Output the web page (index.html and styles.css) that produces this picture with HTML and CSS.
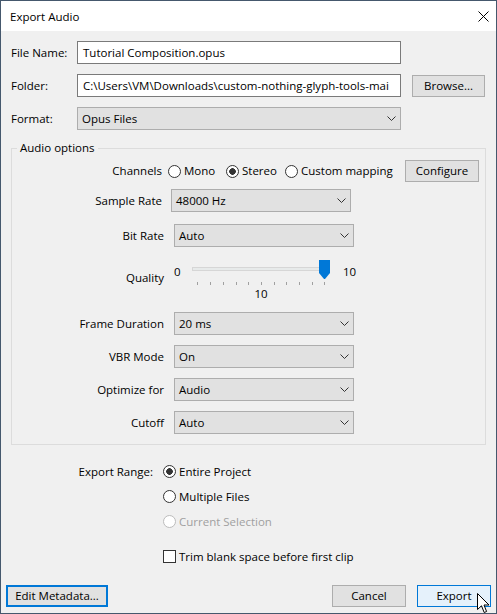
FILE: index.html
```html
<!DOCTYPE html>
<html lang="en">
<head>
<meta charset="utf-8">
<title>Export Audio</title>
<link rel="stylesheet" href="styles.css">
</head>
<body>
<div class="window">
  <header class="titlebar">
    <span class="title">Export Audio</span>
    <svg class="close" width="11" height="11" viewBox="0 0 11 11"><path d="M0.5 0.5 L10.5 10.5 M10.5 0.5 L0.5 10.5" stroke="#000" stroke-width="1" fill="none"/></svg>
  </header>
  <main class="content">
    <div class="row">
      <span class="lbl">File Name:</span>
      <div class="textbox">Tutorial Composition.opus</div>
    </div>
    <div class="row">
      <span class="lbl">Folder:</span>
      <div class="textbox">C:\Users\VM\Downloads\custom-nothing-glyph-tools-mai</div>
      <div class="btn browse">Browse...</div>
    </div>
    <div class="row">
      <span class="lbl">Format:</span>
      <div class="combo format"><span>Opus Files</span><svg class="chev" width="9" height="5" viewBox="0 0 9 5"><polyline points="0.5,0.5 4.5,4.5 8.5,0.5" fill="none" stroke="#333" stroke-width="1"/></svg></div>
    </div>

    <fieldset class="group">
      <legend>Audio options</legend>
      <div class="g-row channels">
        <span class="g-lbl narrow2">Channels</span>
        <span class="radio-opt mono"><span class="radio"></span>Mono</span>
        <span class="radio-opt stereo"><span class="radio checked"></span>Stereo</span>
        <span class="radio-opt custom"><span class="radio"></span>Custom mapping</span>
        <div class="btn configure">Configure</div>
      </div>
      <div class="g-row sample">
        <span class="g-lbl narrow">Sample Rate</span>
        <div class="combo opt-combo"><span>48000 Hz</span><svg class="chev" width="9" height="5" viewBox="0 0 9 5"><polyline points="0.5,0.5 4.5,4.5 8.5,0.5" fill="none" stroke="#333" stroke-width="1"/></svg></div>
      </div>
      <div class="g-row bitrate">
        <span class="g-lbl">Bit Rate</span>
        <div class="combo opt-combo"><span>Auto</span><svg class="chev" width="9" height="5" viewBox="0 0 9 5"><polyline points="0.5,0.5 4.5,4.5 8.5,0.5" fill="none" stroke="#333" stroke-width="1"/></svg></div>
      </div>
      <div class="g-row quality">
        <span class="g-lbl q-lbl">Quality</span>
        <span class="q-min">0</span>
        <div class="slider">
          <div class="track"></div>
          <svg class="ticks" width="138" height="3" viewBox="0 0 138 3">
            <g stroke="#a0a0a0" stroke-width="1">
              <line x1="5.5" y1="0" x2="5.5" y2="3"/>
              <line x1="18.5" y1="0" x2="18.5" y2="3"/>
              <line x1="31.5" y1="0" x2="31.5" y2="3"/>
              <line x1="44.5" y1="0" x2="44.5" y2="3"/>
              <line x1="56.5" y1="0" x2="56.5" y2="3"/>
              <line x1="69.5" y1="0" x2="69.5" y2="3"/>
              <line x1="82.5" y1="0" x2="82.5" y2="3"/>
              <line x1="94.5" y1="0" x2="94.5" y2="3"/>
              <line x1="107.5" y1="0" x2="107.5" y2="3"/>
              <line x1="120.5" y1="0" x2="120.5" y2="3"/>
              <line x1="132.5" y1="0" x2="132.5" y2="3"/>
            </g>
          </svg>
          <div class="q-val">10</div>
          <svg class="thumb" width="11" height="19" viewBox="0 0 11 19"><polygon points="0,0 11,0 11,13 6,19 5,19 0,13" fill="#0078d7"/></svg>
        </div>
        <span class="q-max">10</span>
      </div>
      <div class="g-row">
        <span class="g-lbl">Frame Duration</span>
        <div class="combo opt-combo"><span>20 ms</span><svg class="chev" width="9" height="5" viewBox="0 0 9 5"><polyline points="0.5,0.5 4.5,4.5 8.5,0.5" fill="none" stroke="#333" stroke-width="1"/></svg></div>
      </div>
      <div class="g-row">
        <span class="g-lbl">VBR Mode</span>
        <div class="combo opt-combo"><span>On</span><svg class="chev" width="9" height="5" viewBox="0 0 9 5"><polyline points="0.5,0.5 4.5,4.5 8.5,0.5" fill="none" stroke="#333" stroke-width="1"/></svg></div>
      </div>
      <div class="g-row">
        <span class="g-lbl">Optimize for</span>
        <div class="combo opt-combo"><span>Audio</span><svg class="chev" width="9" height="5" viewBox="0 0 9 5"><polyline points="0.5,0.5 4.5,4.5 8.5,0.5" fill="none" stroke="#333" stroke-width="1"/></svg></div>
      </div>
      <div class="g-row">
        <span class="g-lbl">Cutoff</span>
        <div class="combo opt-combo"><span>Auto</span><svg class="chev" width="9" height="5" viewBox="0 0 9 5"><polyline points="0.5,0.5 4.5,4.5 8.5,0.5" fill="none" stroke="#333" stroke-width="1"/></svg></div>
      </div>
    </fieldset>

    <div class="range">
      <span class="range-lbl">Export Range:</span>
      <div class="range-opts">
        <div class="opt"><span class="radio checked"></span>Entire Project</div>
        <div class="opt"><span class="radio"></span>Multiple Files</div>
        <div class="opt disabled"><span class="radio"></span>Current Selection</div>
        <div class="opt check-row"><span class="checkbox"></span>Trim blank space before first clip</div>
      </div>
    </div>
  </main>

  <footer class="footer">
    <div class="btn focused meta">Edit Metadata...</div>
    <div class="footer-right">
      <div class="btn dlg">Cancel</div>
      <div class="btn dlg hover">Export</div>
    </div>
  </footer>

  <svg class="cursor" width="13" height="21" viewBox="0 0 13 21"><path d="M0.5 0.5 V16.5 L4.5 12.8 L7.2 19.5 L9.6 18.5 L7 12 H12 Z" fill="#fff" stroke="#000" stroke-width="1" stroke-linejoin="miter"/></svg>
</div>
</body>
</html>
```

FILE: styles.css
```css
* { box-sizing: border-box; }
html, body { margin: 0; padding: 0; }
body {
  font-family: "Open Sans", "Noto Sans", sans-serif;
  font-size: 11.5px;
  line-height: 16px;
  color: #000;
  background: #f0f0f0;
}
.window {
  position: relative;
  width: 497px;
  height: 614px;
  border: 1px solid #45586d;
  background: #f0f0f0;
  display: flex;
  flex-direction: column;
  overflow: hidden;
}
.titlebar {
  height: 30px;
  flex: none;
  background: #fff;
  display: flex;
  align-items: center;
  justify-content: space-between;
  padding: 0 7px 0 9px;
}
.title { margin-top: 1px; }
.close { display: block; margin-top: 1px; }

.content { padding: 10px 10px 0 10px; }

.row {
  display: flex;
  align-items: flex-start;
  margin-bottom: 10px;
}
.lbl {
  width: 66px;
  line-height: 23px;
  flex: none;
}
.textbox {
  width: 324px;
  height: 23px;
  border: 1px solid #7a7a7a;
  background: #fff;
  padding-left: 5px;
  line-height: 21px;
  white-space: nowrap;
  overflow: hidden;
  flex: none;
}
.btn {
  height: 22px;
  border: 1px solid #adadad;
  background: #e1e1e1;
  display: flex;
  align-items: center;
  justify-content: center;
  flex: none;
  white-space: nowrap;
}
.browse { width: 73px; margin-left: 11px; margin-top: 1px; }

.combo {
  height: 23px;
  border: 1px solid #adadad;
  background: #e1e1e1;
  display: flex;
  align-items: center;
  justify-content: space-between;
  padding: 0 4px 0 4px;
  flex: none;
  white-space: nowrap;
}
.chev { display: block; }
.format { width: 324px; }

.group {
  margin: 7px 0 0 0;
  padding: 4px 0 10px 0;
  border: 1px solid #dcdcdc;
  min-width: 0;
}
.group legend {
  margin-left: 5px;
  padding: 0 3px;
  line-height: 16px;
}
.g-row {
  display: flex;
  align-items: center;
  margin-top: 10px;
}
.g-lbl {
  width: 152px;
  margin-right: 10px;
  text-align: right;
  flex: none;
  white-space: nowrap;
}
.g-lbl.narrow { width: 150px; margin-right: 9px; }
.g-lbl.narrow2 { width: 150px; margin-right: 6px; }
.channels { margin-top: 0; height: 22px; }
.radio-opt { display: flex; align-items: center; flex: none; white-space: nowrap; }
.mono { width: 58px; }
.stereo { width: 59px; }
.custom { width: 120px; }
.configure { width: 74px; }
.sample { margin-top: 7px; }
.bitrate { margin-top: 12px; }
.opt-combo { width: 180px; }

.radio {
  width: 13px;
  height: 13px;
  border: 1px solid #333;
  border-radius: 50%;
  background: #fff;
  margin-right: 3px;
  flex: none;
}
.radio.checked {
  background: radial-gradient(circle at center, #333 0, #333 3px, #fff 3.6px);
}
.checkbox {
  width: 13px;
  height: 13px;
  border: 1px solid #333;
  background: #fff;
  margin-right: 3px;
  flex: none;
}

.quality {
  margin-top: 13px;
  height: 42px;
  align-items: flex-start;
}
.q-lbl { margin-top: 10px; }
.q-min { width: 18px; margin-top: 4px; flex: none; }
.slider {
  position: relative;
  width: 138px;
  height: 42px;
  flex: none;
}
.track {
  margin-top: 7px;
  height: 4px;
  border: 1px solid #d6d6d6;
  background: #e7eaea;
}
.ticks { display: block; margin-top: 11px; }
.q-val { margin-top: 1px; text-align: center; }
.thumb { position: absolute; left: 127px; top: 0; display: block; }
.q-max { margin-left: 13px; margin-top: 4px; }

.range {
  display: flex;
  margin-top: 14px;
}
.range-lbl {
  width: 142px;
  margin-right: 10px;
  text-align: right;
  line-height: 25px;
  flex: none;
}
.range-opts { display: flex; flex-direction: column; }
.opt {
  height: 25px;
  display: flex;
  align-items: center;
  white-space: nowrap;
}
.opt.disabled { color: #a0a0a0; }
.opt.disabled .radio { border-color: #bcbcbc; }
.check-row { margin-top: 10px; }

.footer {
  margin-top: auto;
  padding: 0 5px 6px 5px;
  display: flex;
  justify-content: space-between;
}
.meta { width: 102px; border: 2px solid #0078d7; }
.footer-right { display: flex; gap: 11px; }
.dlg { width: 74px; }
.dlg.hover { border-color: #0078d7; background: #e5f1fb; }

.cursor { position: absolute; left: 476px; top: 592px; display: block; }
```
